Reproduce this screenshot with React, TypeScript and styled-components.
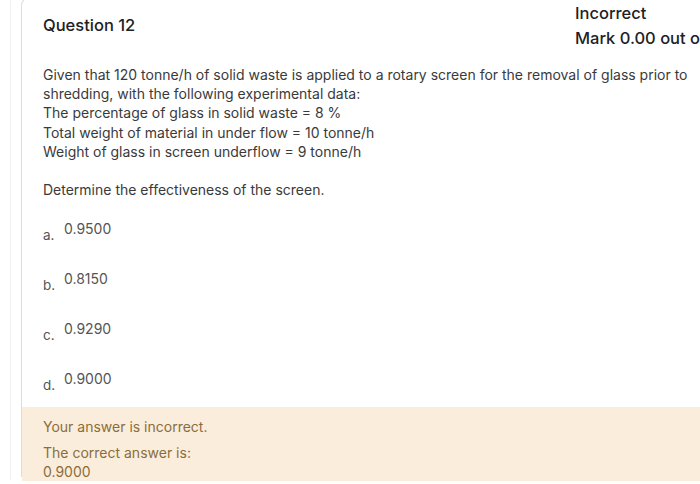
import React from "react";
import styled, { createGlobalStyle } from "styled-components";

const Global = createGlobalStyle`
  html, body { margin: 0; padding: 0; background: #fff; }
  body { font-family: Inter, "Noto Sans", sans-serif; overflow: hidden; }
`;

const Page = styled.div`
  width: 700px;
  height: 484px;
  overflow: hidden;
  padding-left: 10px;
  box-sizing: border-box;
`;

const Rail = styled.div`
  border-left: 1px solid #efefef;
  height: 484px;
  padding-left: 10px;
`;

const Card = styled.div`
  width: 900px;
  height: 480px;
  border-left: 1px solid #dcdcdc;
  border-top: 1px solid #e6e6e6;
  border-top-left-radius: 10px;
  margin-top: -4px;
  display: flex;
  flex-direction: column;
`;

const Header = styled.div`
  display: flex;
  padding: 4px 0 0 21px;
`;

const Title = styled.h3`
  margin: 14px 0 0;
  width: 532px;
  font-size: 16.5px;
  font-weight: 500;
  color: #1d2125;
`;

const State = styled.div`
  font-size: 16.5px;
  font-weight: 500;
  color: #1d2125;
  line-height: 25px;
  white-space: nowrap;
`;

const Body = styled.div`
  padding: 14px 0 0 21px;
  font-size: 14px;
  line-height: 19.2px;
  color: #3a3a3a;
  width: 655px;
`;

const Para = styled.p<{ $gap?: number }>`
  margin: 0 0 ${(p) => p.$gap ?? 0}px;
`;

const Options = styled.div`
  display: flex;
  flex-direction: column;
  gap: 31px;
  padding: 21px 0 0 21px;
`;

const Option = styled.div`
  display: flex;
  align-items: flex-start;
  height: 19px;
`;

const Letter = styled.span`
  width: 21px;
  padding-top: 7px;
  font-size: 13.5px;
  color: #555;
`;

const Value = styled.span`
  font-size: 14px;
  color: #555;
`;

const Feedback = styled.div`
  margin-top: 18px;
  background: #fbeddb;
  padding: 10px 21px 0;
  height: 76px;
  box-sizing: border-box;
  color: #8a6d3b;
  font-size: 14px;
  line-height: 19px;
`;

const FeedLine = styled.div<{ $gap?: number }>`
  margin-bottom: ${(p) => p.$gap ?? 0}px;
`;

export default function App() {
  const opts = [
    ["a.", "0.9500"],
    ["b.", "0.8150"],
    ["c.", "0.9290"],
    ["d.", "0.9000"],
  ];
  return (
    <>
      <Global />
      <Page>
        <Rail>
          <Card>
            <Header>
              <Title>Question 12</Title>
              <State>
                <div>Incorrect</div>
                <div>Mark 0.00 out of 1.00</div>
              </State>
            </Header>
            <Body>
              <Para $gap={19}>
                Given that 120 tonne/h of solid waste is applied to a rotary screen for the removal of glass prior to shredding, with the following experimental data:
                <br />
                The percentage of glass in solid waste = 8 %
                <br />
                Total weight of material in under flow = 10 tonne/h
                <br />
                Weight of glass in screen underflow = 9 tonne/h
              </Para>
              <Para>Determine the effectiveness of the screen.</Para>
            </Body>
            <Options>
              {opts.map(([l, v]) => (
                <Option key={l}>
                  <Letter>{l}</Letter>
                  <Value>{v}</Value>
                </Option>
              ))}
            </Options>
            <Feedback>
              <FeedLine $gap={7}>Your answer is incorrect.</FeedLine>
              <FeedLine>The correct answer is:</FeedLine>
              <FeedLine>0.9000</FeedLine>
            </Feedback>
          </Card>
        </Rail>
      </Page>
    </>
  );
}
